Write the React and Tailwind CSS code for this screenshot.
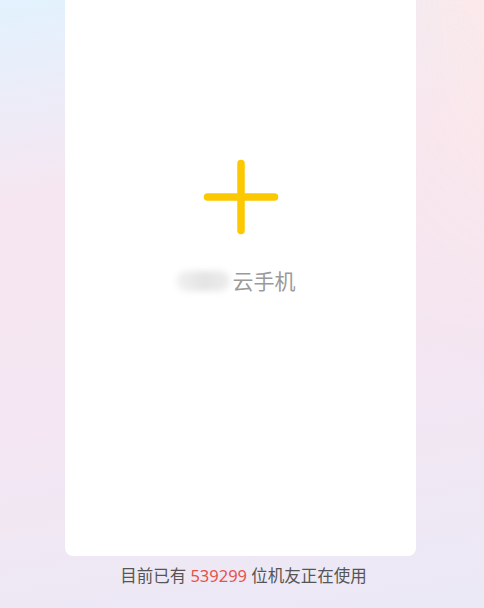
import React from 'react';

function PlusIcon() {
  return (
    <svg width="76" height="76" viewBox="0 0 76 76" fill="none">
      <path d="M38 4.5 V71.5 M4.5 38 H71.5" stroke="#fcc800" strokeWidth="7.5" strokeLinecap="round" />
    </svg>
  );
}

export default function App() {
  return (
    <div
      className="relative w-[484px] h-[608px] overflow-hidden bg-[linear-gradient(170deg,#e2f2fe_0%,#f6e6f1_30%,#f4e6f2_60%,#ebe9f6_100%)]"
      style={{ fontFamily: '"Noto Sans", "Noto Sans CJK SC", sans-serif' }}
    >
      <div className="absolute inset-0 bg-[linear-gradient(90deg,transparent_60%,rgba(253,232,232,0.9)_100%)] [mask-image:linear-gradient(180deg,black_0%,transparent_60%)]" />
      <div className="relative flex flex-col">
        <div className="ml-[65px] w-[351px] h-[556px] bg-white rounded-b-lg flex flex-col items-center">
          <div className="mt-[159px] ml-[1px]">
            <PlusIcon />
          </div>
          <div className="mt-[31px] mr-[10px] flex items-center text-[21px] leading-[30px] text-[#9a9a9a]">
            <span className="w-[54px] h-[20px] mr-[3px] rounded-full blur-[3px] bg-[linear-gradient(90deg,#f2f2f2_0%,#e4e4e4_50%,#ececec_100%)]" />
            <span>云手机</span>
          </div>
        </div>
        <div className="mt-[8px] ml-[3px] text-center text-[16.5px] leading-[24px] text-[#555555]">
          目前已有 <span className="text-[#e5534b]">539299</span> 位机友正在使用
        </div>
      </div>
    </div>
  );
}
